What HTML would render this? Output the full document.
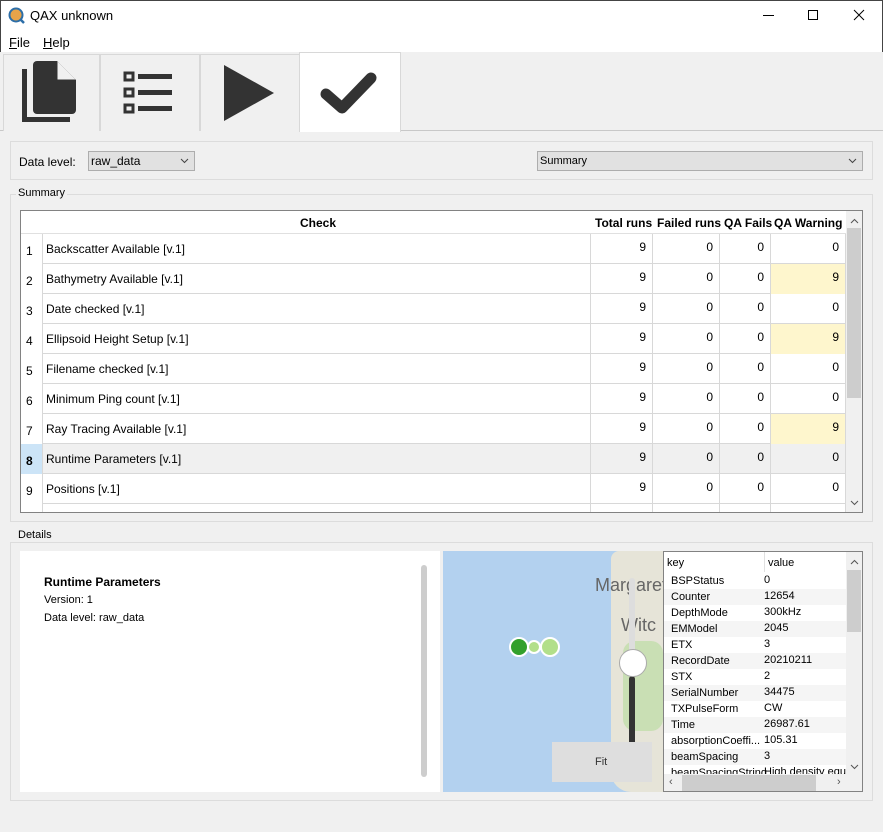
<!DOCTYPE html>
<html><head><meta charset="utf-8"><style>
*{box-sizing:border-box;margin:0;padding:0}
body{width:883px;height:832px;background:#f0f0f0;font-family:"Liberation Sans",sans-serif;font-size:12px;color:#000;position:relative;overflow:hidden}
.a{position:absolute}
.t{position:absolute;white-space:nowrap}
.row{position:absolute;left:0;width:825px;height:30px;border-bottom:1px solid #d8d8d8}
.c{position:absolute;top:0;height:30px;border-right:1px solid #d8d8d8}
.n{text-align:right;padding-right:6px;padding-top:6px}
</style></head><body>
<div class="a" style="left:0;top:0;width:883px;height:52px;background:#fff;border:1px solid #444;border-bottom:none"></div>
<svg class="a" style="left:8px;top:7px" width="17" height="17"><circle cx="8" cy="8" r="6.5" fill="#e8a34a" stroke="#2c6ea8" stroke-width="2"/><path d="M12 12l4 4" stroke="#2c6ea8" stroke-width="2.5"/></svg>
<div class="t" style="left:30px;top:8px;font-size:13px">QAX unknown</div>
<div class="a" style="left:763px;top:15px;width:11px;height:1px;background:#000"></div>
<div class="a" style="left:808px;top:10px;width:10px;height:10px;border:1px solid #000"></div>
<svg class="a" style="left:853px;top:9px" width="12" height="12"><path d="M1 1L11 11M11 1L1 11" stroke="#000" stroke-width="1"/></svg>
<div class="t" style="left:9px;top:35px;font-size:13px"><u>F</u>ile</div>
<div class="t" style="left:43px;top:35px;font-size:13px"><u>H</u>elp</div>
<div class="a" style="left:0;top:52px;width:883px;height:79px;background:#f0f0f0;border-bottom:1px solid #c8c8c8"></div>
<div class="a" style="left:3px;top:54px;width:97px;height:77px;border:1px solid #d8d8d8;border-bottom:none;background:#f0f0f0"></div>
<div class="a" style="left:100px;top:54px;width:100px;height:77px;border:1px solid #d8d8d8;border-bottom:none;background:#f0f0f0"></div>
<div class="a" style="left:200px;top:54px;width:100px;height:77px;border:1px solid #d8d8d8;border-bottom:none;background:#f0f0f0"></div>
<div class="a" style="left:299px;top:52px;width:102px;height:80px;background:#fff;border:1px solid #d8d8d8;border-bottom:none"></div>
<svg class="a" style="left:20px;top:58px" width="60" height="68"><path d="M4.5 11V61.5H50" fill="none" stroke="#333" stroke-width="5"/><path d="M17 3H37L56 22V52a4 4 0 0 1-4 4H17a4 4 0 0 1-4-4V7a4 4 0 0 1 4-4z" fill="#333"/><path d="M37.5 3.5V21.5H55.5z" fill="#f0f0f0"/></svg>
<svg class="a" style="left:122px;top:70px" width="52" height="45"><rect x="3" y="3" width="8" height="7" fill="none" stroke="#333" stroke-width="3"/><rect x="3" y="19" width="8" height="7" fill="none" stroke="#333" stroke-width="3"/><rect x="3" y="35" width="8" height="7" fill="none" stroke="#333" stroke-width="3"/><rect x="16" y="4" width="34" height="5" fill="#333"/><rect x="16" y="20" width="34" height="5" fill="#333"/><rect x="16" y="36" width="34" height="5" fill="#333"/></svg>
<svg class="a" style="left:222px;top:64px" width="55" height="58"><path d="M2 1L52 29L2 57z" fill="#333"/></svg>
<svg class="a" style="left:319px;top:70px" width="60" height="45"><path d="M7 24L23 38L52 8" fill="none" stroke="#333" stroke-width="11" stroke-linecap="round" stroke-linejoin="round"/></svg>
<div class="a" style="left:10px;top:141px;width:863px;height:39px;border:1px solid #dcdcdc"></div>
<div class="t" style="left:19px;top:155px">Data level:</div>
<div class="a" style="left:88px;top:151px;width:107px;height:20px;border:1px solid #adadad;background:#e1e1e1"></div>
<div class="t" style="left:91px;top:154px">raw_data</div>
<svg class="a" style="left:180px;top:158px" width="9" height="6"><path d="M1 1l3.5 3.5L8 1" fill="none" stroke="#444"/></svg>
<div class="a" style="left:537px;top:151px;width:326px;height:20px;border:1px solid #adadad;background:#e1e1e1"></div>
<div class="t" style="left:540px;top:155px;font-size:11px">Summary</div>
<svg class="a" style="left:848px;top:158px" width="9" height="6"><path d="M1 1l3.5 3.5L8 1" fill="none" stroke="#444"/></svg>
<div class="a" style="left:10px;top:194px;width:863px;height:328px;border:1px solid #dcdcdc"></div>
<div class="t" style="left:16px;top:187px;background:#f0f0f0;padding:0 2px;font-size:11px">Summary</div>
<div class="a" style="left:20px;top:210px;width:843px;height:303px;border:1px solid #828282;background:#fff;overflow:hidden">
 <div class="a" style="left:0;top:0;width:825px;height:23px;background:#fff;border-bottom:1px solid #e0e0e0;font-weight:bold">
  <div class="t" style="left:279px;top:5px">Check</div>
  <div class="t" style="left:574px;top:5px">Total runs</div>
  <div class="t" style="left:636px;top:5px">Failed runs</div>
  <div class="t" style="left:703px;top:5px">QA Fails</div>
  <div class="t" style="left:753px;top:5px">QA Warning</div>
 </div>
 <div id="rows"></div>
 <div class="a" style="left:825px;top:0;width:16px;height:301px;background:#f0f0f0"></div>
 <div class="a" style="left:826px;top:17px;width:14px;height:170px;background:#cdcdcd"></div>
 <svg class="a" style="left:829px;top:7px" width="9" height="6"><path d="M1 5l3.5-3.5L8 5" fill="none" stroke="#555"/></svg>
 <svg class="a" style="left:829px;top:289px" width="9" height="6"><path d="M1 1l3.5 3.5L8 1" fill="none" stroke="#555"/></svg>
</div>
<div class="a" style="left:10px;top:542px;width:863px;height:259px;border:1px solid #dcdcdc"></div>
<div class="t" style="left:16px;top:529px;background:#f0f0f0;padding:0 2px;font-size:11px">Details</div>
<div class="a" style="left:20px;top:551px;width:420px;height:241px;background:#fff"></div>
<div class="a" style="left:421px;top:565px;width:6px;height:212px;background:#cdcdcd;border-radius:3px"></div>
<div class="t" style="left:44px;top:575px;font-weight:bold">Runtime Parameters</div>
<div class="t" style="left:44px;top:594px;font-size:11px">Version: 1</div>
<div class="t" style="left:44px;top:612px;font-size:11px">Data level: raw_data</div>
<div class="a" style="left:443px;top:551px;width:220px;height:241px;background:#b3d1ef;overflow:hidden">
 <div class="a" style="left:168px;top:0;width:60px;height:241px;background:#e6e4d8;border-radius:8px 0 0 20px"></div>
 <div class="a" style="left:180px;top:90px;width:40px;height:90px;background:#c9dfb4;border-radius:12px"></div>
 <div class="t" style="left:152px;top:24px;font-size:18px;color:#666">Margaret</div>
 <div class="t" style="left:178px;top:64px;font-size:18px;color:#666">Witc</div>
 <div class="a" style="left:66px;top:86px;width:20px;height:20px;border-radius:50%;background:#33a02c;border:2px solid #fff"></div>
 <div class="a" style="left:84px;top:89px;width:14px;height:14px;border-radius:50%;background:#b2df8a;border:2px solid #fff"></div>
 <div class="a" style="left:97px;top:86px;width:20px;height:20px;border-radius:50%;background:#b2df8a;border:2px solid #fff"></div>
 <div class="a" style="left:186px;top:27px;width:6px;height:95px;background:#ddd;border-radius:3px"></div>
 <div class="a" style="left:186px;top:125px;width:6px;height:80px;background:#333;border-radius:3px"></div>
 <div class="a" style="left:176px;top:98px;width:28px;height:28px;border-radius:50%;background:#fff;border:1px solid #aaa"></div>
 <div class="a" style="left:109px;top:191px;width:100px;height:40px;background:#dedede"></div>
 <div class="t" style="left:152px;top:205px;font-size:11px;color:#333">Fit</div>
</div>
<div class="a" style="left:663px;top:551px;width:200px;height:241px;border:1px solid #828282;background:#fff;overflow:hidden;font-size:11px">
 <div class="t" style="left:3px;top:5px">key</div><div class="a" style="left:100px;top:0;width:1px;height:20px;background:#e0e0e0"></div>
 <div class="t" style="left:104px;top:5px">value</div>
 <div id="props"></div>
 <div class="a" style="left:182px;top:0;width:17px;height:224px;background:#f0f0f0"></div>
 <div class="a" style="left:183px;top:18px;width:14px;height:62px;background:#cdcdcd"></div>
 <svg class="a" style="left:186px;top:7px" width="9" height="6"><path d="M1 5l3.5-3.5L8 5" fill="none" stroke="#555"/></svg>
 <svg class="a" style="left:186px;top:212px" width="9" height="6"><path d="M1 1l3.5 3.5L8 1" fill="none" stroke="#555"/></svg>
 <div class="a" style="left:0;top:222px;width:199px;height:18px;background:#f0f0f0"></div>
 <div class="a" style="left:18px;top:223px;width:134px;height:16px;background:#cdcdcd"></div>
 <div class="t" style="left:5px;top:224px;color:#555">‹</div><div class="t" style="left:173px;top:224px;color:#555">›</div>
</div>
<script>
var rows=[["Backscatter Available [v.1]",9,0,0,0],["Bathymetry Available [v.1]",9,0,0,9],["Date checked [v.1]",9,0,0,0],["Ellipsoid Height Setup [v.1]",9,0,0,9],["Filename checked [v.1]",9,0,0,0],["Minimum Ping count [v.1]",9,0,0,0],["Ray Tracing Available [v.1]",9,0,0,9],["Runtime Parameters [v.1]",9,0,0,0],["Positions [v.1]",9,0,0,0],["",1,0,0,0]];
var h="";
rows.forEach(function(r,i){var top=23+i*30,sel=i==7;
h+='<div class="row" style="top:'+top+'px;background:'+(sel?'#f0f0f0':'#fff')+'">'+
'<div class="c" style="left:0;width:22px;background:'+(sel?'#cce4f7':'#fff')+';font-weight:'+(sel?'bold':'normal')+'"><span class="t" style="left:5px;top:10px">'+(i+1)+'</span></div>'+
'<div class="c" style="left:22px;width:548px"><span class="t" style="left:3px;top:8px">'+r[0]+'</span></div>'+
'<div class="c n" style="left:570px;width:62px">'+r[1]+'</div>'+
'<div class="c n" style="left:632px;width:67px">'+r[2]+'</div>'+
'<div class="c n" style="left:699px;width:51px">'+r[3]+'</div>'+
'<div class="c n" style="left:750px;width:75px;background:'+(r[4]==9?'#fef6cd':'transparent')+'">'+r[4]+'</div></div>';});
document.getElementById("rows").innerHTML=h;
var p=[["BSPStatus","0"],["Counter","12654"],["DepthMode","300kHz"],["EMModel","2045"],["ETX","3"],["RecordDate","20210211"],["STX","2"],["SerialNumber","34475"],["TXPulseForm","CW"],["Time","26987.61"],["absorptionCoeffi...","105.31"],["beamSpacing","3"],["beamSpacingString","High density equ"]];
h="";p.forEach(function(r,i){var top=21+i*16;h+='<div class="a" style="left:0;top:'+top+'px;width:183px;height:16px;background:'+(i%2?'#f5f5f5':'#fff')+'"><span class="t" style="left:7px;top:2px">'+r[0]+'</span><span class="t" style="left:100px;top:1px">'+r[1]+'</span></div>';});
document.getElementById("props").innerHTML=h;
</script>
</body></html>
